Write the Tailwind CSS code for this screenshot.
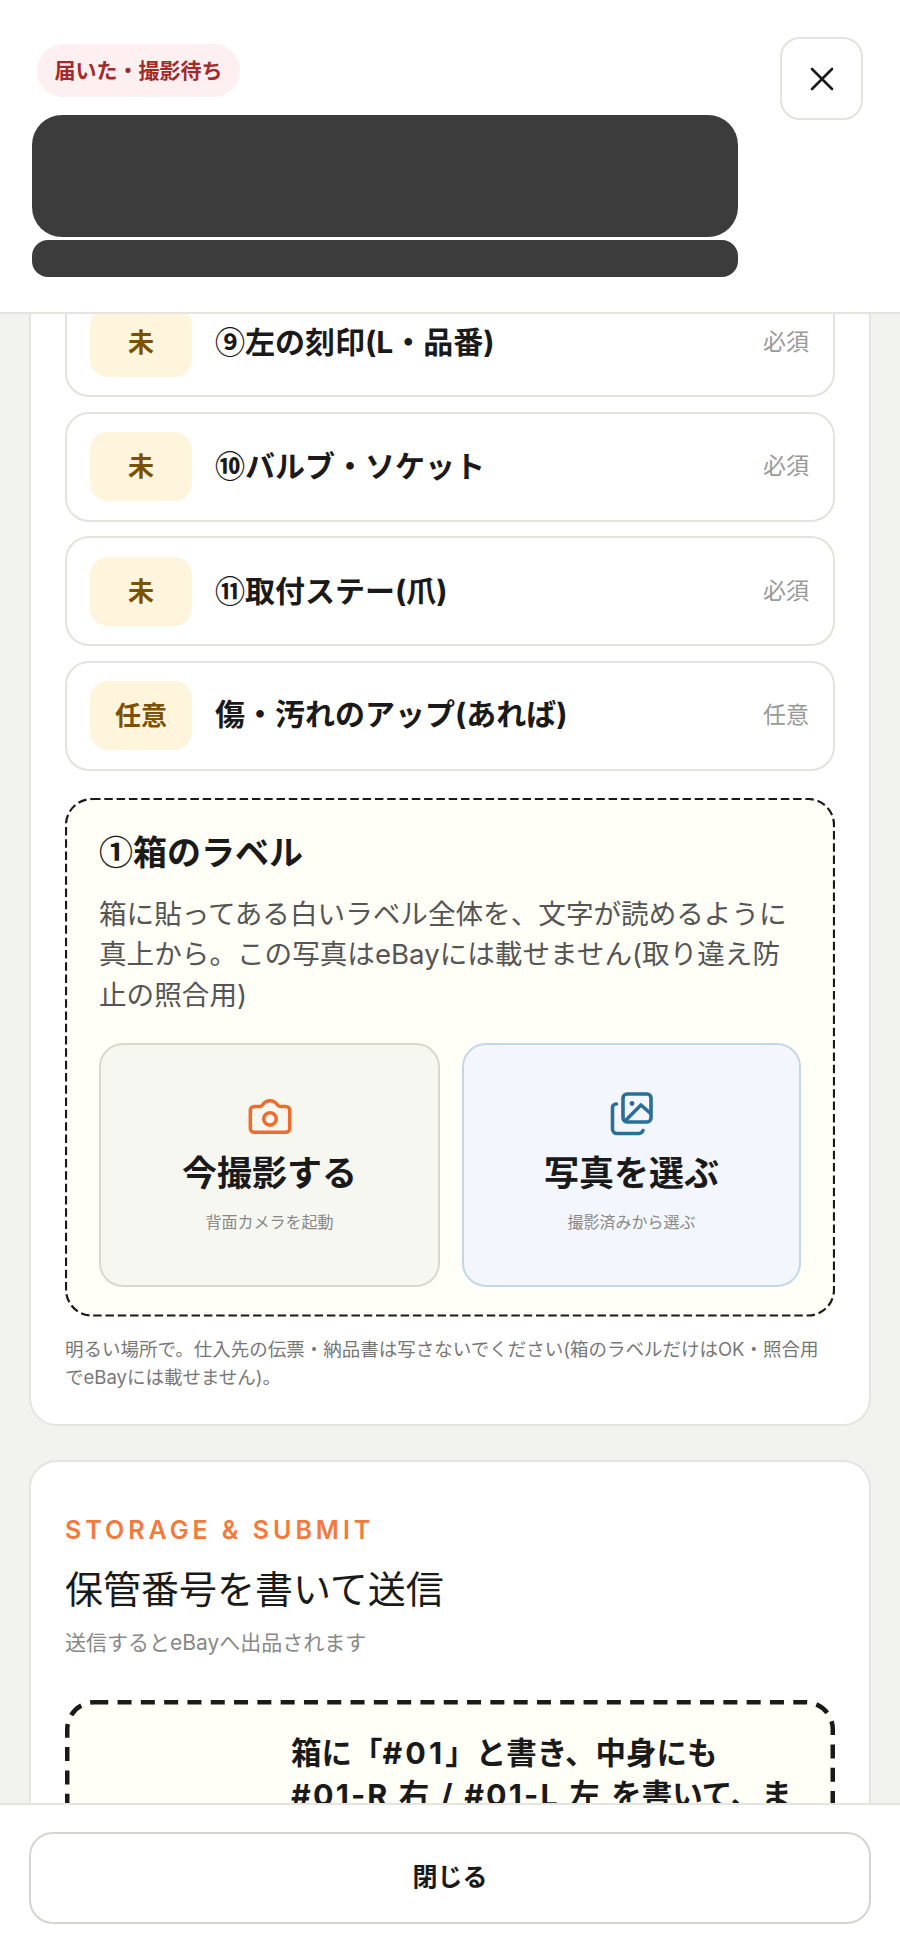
<!DOCTYPE html>
<html lang="ja">
<head>
<meta charset="UTF-8" />
<meta name="viewport" content="width=device-width, initial-scale=1.0" />
<title>撮影</title>
<script src="https://cdn.jsdelivr.net/npm/@tailwindcss/browser@4"></script>
</head>
<body class="h-[1948px] flex flex-col overflow-hidden bg-[#f2f2ee] text-[#1a1a1a] font-['Inter','Noto_Sans_CJK_JP',sans-serif]">
  <!-- Header -->
  <header class="relative z-10 h-[314px] shrink-0 flex justify-between bg-white border-b-2 border-[#e5e5df] pl-[32px] pr-[37px]">
    <div class="w-[706px] pt-[44px]">
      <span class="ml-[5px] flex w-[203px] h-[53px] items-center justify-center rounded-full bg-[#fef0f0] text-[21px] font-bold text-[#a32a2a]">届いた・撮影待ち</span>
      <div class="mt-[18px] h-[122px] rounded-[30px] bg-[#3c3c3c]"></div>
      <div class="mt-[3px] h-[37px] rounded-[16px] bg-[#3c3c3c]"></div>
    </div>
    <button class="mt-[37px] w-[83px] h-[83px] flex items-center justify-center rounded-[20px] border-2 border-[#e3e3dd] bg-white">
      <svg width="26" height="26" viewBox="0 0 26 26" fill="none" stroke="#1a1a1a" stroke-width="2.6" stroke-linecap="round"><path d="M3 3l20 20M23 3L3 23"/></svg>
    </button>
  </header>

  <!-- Scrolled content -->
  <main class="flex-1 overflow-hidden px-[29px]">
    <section class="-mt-[40px] rounded-[28px] border-2 border-[#e5e5df] bg-white px-[34px] pt-[11px] pb-[33px]">
      <div class="flex flex-col gap-[14.5px]">
        <div class="h-[110px] flex items-center rounded-[24px] border-2 border-[#e3e3dd] bg-white pl-[23px] pr-[24px]">
          <span class="w-[102px] h-[69px] flex items-center justify-center rounded-[18px] bg-[#fff4dc] text-[26px] font-bold text-[#7a5200]">未</span>
          <span class="ml-[23px] pb-[2px] flex-1 text-[30px] font-bold"><span class="font-['Noto_Sans_CJK_JP']">⑨</span>左の刻印(L・品番)</span>
          <span class="text-[23px] text-[#999]">必須</span>
        </div>
        <div class="h-[110px] flex items-center rounded-[24px] border-2 border-[#e3e3dd] bg-white pl-[23px] pr-[24px]">
          <span class="w-[102px] h-[69px] flex items-center justify-center rounded-[18px] bg-[#fff4dc] text-[26px] font-bold text-[#7a5200]">未</span>
          <span class="ml-[23px] pb-[2px] flex-1 text-[30px] font-bold"><span class="font-['Noto_Sans_CJK_JP']">⑩</span>バルブ・ソケット</span>
          <span class="text-[23px] text-[#999]">必須</span>
        </div>
        <div class="h-[110px] flex items-center rounded-[24px] border-2 border-[#e3e3dd] bg-white pl-[23px] pr-[24px]">
          <span class="w-[102px] h-[69px] flex items-center justify-center rounded-[18px] bg-[#fff4dc] text-[26px] font-bold text-[#7a5200]">未</span>
          <span class="ml-[23px] pb-[2px] flex-1 text-[30px] font-bold"><span class="font-['Noto_Sans_CJK_JP']">⑪</span>取付ステー(爪)</span>
          <span class="text-[23px] text-[#999]">必須</span>
        </div>
        <div class="h-[110px] flex items-center rounded-[24px] border-2 border-[#e3e3dd] bg-white pl-[23px] pr-[24px]">
          <span class="w-[102px] h-[69px] flex items-center justify-center rounded-[18px] bg-[#fff4dc] text-[26px] font-bold text-[#7a5200]">任意</span>
          <span class="ml-[23px] pb-[2px] flex-1 text-[30px] font-bold">傷・汚れのアップ(あれば)</span>
          <span class="text-[23px] text-[#999]">任意</span>
        </div>
      </div>

      <!-- Current shot -->
      <div class="relative mt-[27px] rounded-[26px] bg-[#fffef7] px-[34px] pt-[28px] pb-[31px]">
        <svg class="absolute inset-0 w-full h-full pointer-events-none" fill="none"><rect x="1" y="1" width="768" height="516.5" rx="26" stroke="#1a1a1a" stroke-width="2.2" stroke-dasharray="8.500 3.800"/></svg>
        <h3 class="text-[34px] leading-[50px] font-bold"><span class="font-['Noto_Sans_CJK_JP']">①</span>箱のラベル</h3>
        <p class="mt-[16px] text-[27.6px] leading-[40.5px] text-[#555]">箱に貼ってある白いラベル全体を、文字が読めるように真上から。この写真はeBayには載せません(取り違え防止の照合用)</p>
        <div class="mt-[28px] flex gap-[22px]">
          <button class="w-[341px] h-[244px] flex flex-col items-center rounded-[24px] border-2 border-[#d8d8d0] bg-[#f7f7f2] pt-[49px]">
            <svg width="46" height="46" viewBox="0 0 48 48" fill="none" stroke="#f26b2e" stroke-width="3.700" stroke-linejoin="round"><path d="M7.500 13h6c1.200 0 2-.6 2.800-1.700C17.500 9.500 19.500 7 24 7s6.500 2.500 7.700 4.300c.8 1.100 1.600 1.700 2.800 1.700h6a4 4 0 0 1 4 4v19a4 4 0 0 1-4 4h-33a4 4 0 0 1-4-4V17a4 4 0 0 1 4-4z"/><circle cx="24" cy="26" r="6.500"/></svg>
            <span class="mt-[8px] text-[35px] leading-[50px] font-bold">今撮影する</span>
            <span class="mt-[12px] text-[16px] leading-[24px] text-[#888]">背面カメラを起動</span>
          </button>
          <button class="w-[339px] h-[244px] flex flex-col items-center rounded-[24px] border-2 border-[#c5d6e8] bg-[#f3f7fd] pt-[46px]">
            <svg width="48" height="48" viewBox="0 0 48 48" fill="none" stroke="#2a6f97" stroke-width="3.600" stroke-linecap="round" stroke-linejoin="round"><rect x="15" y="3" width="28" height="28" rx="4"/><circle cx="24" cy="12.500" r="2.400" fill="#2a6f97" stroke="none"/><path d="M18 29l15-15 9 8"/><path d="M8.500 13H8a3.500 3.500 0 0 0-3.500 3.500V38A4.500 4.500 0 0 0 9 42.500h22a4.500 4.500 0 0 0 4-3"/></svg>
            <span class="mt-[9px] text-[35px] leading-[50px] font-bold">写真を選ぶ</span>
            <span class="mt-[12px] text-[16px] leading-[24px] text-[#888]">撮影済みから選ぶ</span>
          </button>
        </div>
      </div>
      <p class="mt-[17px] text-[18.5px] leading-[28px] text-[#777]">明るい場所で。仕入先の伝票・納品書は写さないでください(箱のラベルだけはOK・照合用でeBayには載せません)。</p>
    </section>

    <!-- Storage and submit -->
    <section class="mt-[34px] rounded-[28px] border-2 border-[#e5e5df] bg-white px-[34px] pt-[50px] pb-[40px]">
      <p class="text-[25px] leading-[36px] font-semibold tracking-[0.16em] text-[#f47a3c]">STORAGE &amp; SUBMIT</p>
      <h2 class="mt-[13px] text-[38px] leading-[56px] font-normal">保管番号を書いて送信</h2>
      <p class="mt-[10px] text-[21px] leading-[32px] text-[#888]">送信するとeBayへ出品されます</p>
      <div class="relative mt-[41px] rounded-[28px] bg-[#fffef7] pl-[226px] pr-[24px] pt-[32px] pb-[34px]">
        <svg class="absolute inset-0 w-full h-full pointer-events-none" fill="none"><rect x="2.250" y="2.250" width="765.500" height="145.500" rx="27" stroke="#1a1a1a" stroke-width="4.500" stroke-dasharray="14 9.300"/></svg>
        <p class="text-[30.5px] leading-[42px] font-bold whitespace-nowrap">箱に「<span class="tracking-[0.1em]">#01</span>」と書き、中身にも<br><span class="tracking-[0.07em]">#01-R 右 / #01-L 左 </span>を書いて、ま</p>
      </div>
    </section>
  </main>

  <!-- Footer -->
  <footer class="relative z-10 h-[145px] shrink-0 bg-white border-t-2 border-[#e5e5df] px-[29px] pt-[27px]">
    <button class="w-full h-[92px] rounded-[24px] border-2 border-[#d4d4d0] bg-white text-[25px] font-bold">閉じる</button>
  </footer>
</body>
</html>
